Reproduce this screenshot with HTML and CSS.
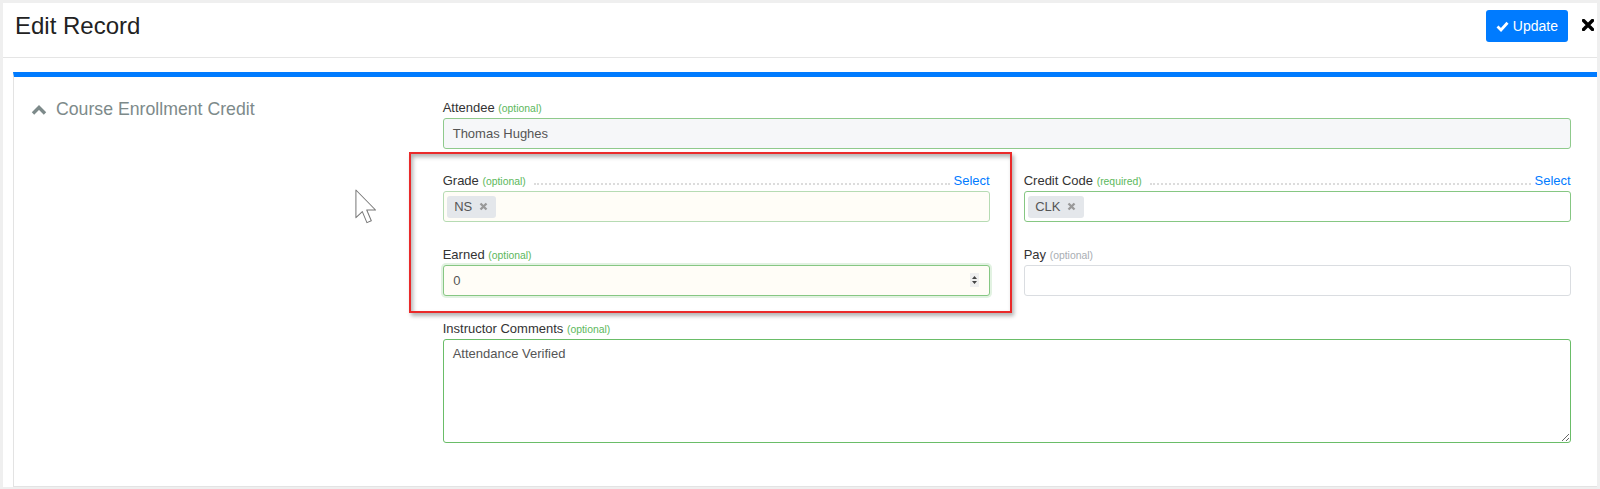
FILE: index.html
```html
<!DOCTYPE html>
<html lang="en">
<head>
    <meta charset="UTF-8">
    <meta name="viewport" content="width=device-width, initial-scale=1.0">
    <title>Edit Record</title>
    <link rel="stylesheet" href="styles.css">
</head>
<body>

    <div class="modal">
        <header class="modal-header">
            <h1 class="modal-title">Edit Record</h1>
            <div class="modal-actions">
                <button class="btn-update">
                    <svg width="13" height="11" viewBox="0 0 13 11"><polyline points="1.5,5.5 5,9 11.5,1.8" fill="none" stroke="#fff" stroke-width="2.8"/></svg>
                    Update
                </button>
                <span class="btn-close">
                    <svg width="12" height="12" viewBox="0 0 12 12"><path d="M1.5 1.5 L10.5 10.5 M10.5 1.5 L1.5 10.5" stroke="#000" stroke-width="3.4" stroke-linecap="round"/></svg>
                </span>
            </div>
        </header>

        <div class="modal-body">
            <div class="card">
                <div class="card-side">
                    <h2 class="section-title">
                        <svg width="16" height="10" viewBox="0 0 16 10"><polyline points="2,8.5 8,2.5 14,8.5" fill="none" stroke="#7d8a8a" stroke-width="3.4"/></svg>
                        Course Enrollment Credit
                    </h2>
                </div>

                <div class="card-form">
                    <div class="field">
                        <label class="field-label">Attendee <span class="hint">(optional)</span></label>
                        <div class="control control-readonly">Thomas Hughes</div>
                    </div>

                    <div class="field-row">
                        <div class="field">
                            <div class="label-row">
                                <span class="field-label">Grade <span class="hint">(optional)</span></span>
                                <span class="leader"></span>
                                <a class="select-link">Select</a>
                            </div>
                            <div class="control control-cream">
                                <span class="tag">NS <svg width="9" height="9" viewBox="0 0 9 9"><path d="M1.5 1.5 L7.5 7.5 M7.5 1.5 L1.5 7.5" stroke="#999" stroke-width="2.3"/></svg></span>
                            </div>
                        </div>
                        <div class="field">
                            <div class="label-row">
                                <span class="field-label">Credit Code <span class="hint">(required)</span></span>
                                <span class="leader"></span>
                                <a class="select-link">Select</a>
                            </div>
                            <div class="control control-valid">
                                <span class="tag">CLK <svg width="9" height="9" viewBox="0 0 9 9"><path d="M1.5 1.5 L7.5 7.5 M7.5 1.5 L1.5 7.5" stroke="#999" stroke-width="2.3"/></svg></span>
                            </div>
                        </div>
                    </div>

                    <div class="field-row">
                        <div class="field">
                            <label class="field-label">Earned <span class="hint">(optional)</span></label>
                            <div class="control control-cream control-focus">
                                <span class="control-value">0</span>
                                <svg class="spinner" width="9" height="14" viewBox="0 0 9 14"><rect x="0" y="0" width="9" height="14" fill="#efefef"/><path d="M4.5 3 L7 6 L2 6 Z M4.5 11 L7 8 L2 8 Z" fill="#444"/></svg>
                            </div>
                        </div>
                        <div class="field">
                            <label class="field-label">Pay <span class="hint hint-muted">(optional)</span></label>
                            <div class="control"></div>
                        </div>
                    </div>

                    <div class="field field-last">
                        <label class="field-label">Instructor Comments <span class="hint">(optional)</span></label>
                        <textarea class="comments" readonly>Attendance Verified</textarea>
                    </div>
                </div>
            </div>
        </div>

        <!-- screenshot annotations -->
        <div class="highlight-box"></div>
        <svg class="pointer" width="22" height="35" viewBox="0 0 12 19"><path d="M0.5 0.5 L0.5 15.6 L4 12.3 L6.5 18.3 L8.9 17.3 L6.4 11.4 L11.2 11.4 Z" fill="#fff" stroke="#777" stroke-width="0.55" stroke-linejoin="round"/></svg>
    </div>

</body>
</html>
```

FILE: styles.css
```css
body {
    margin: 0;
    height: 489px;
    overflow: hidden;
    background-color: #efefef;
    font-family: "Liberation Sans", Arial, sans-serif;
    color: #333;
}

.modal {
    position: relative;
    margin: 3px 3px 0 3px;
    height: 484px;
    overflow: hidden;
    background-color: #fff;
}

.modal-header {
    box-sizing: border-box;
    height: 55px;
    padding: 7px 3px 0 12px;
    display: flex;
    justify-content: space-between;
    align-items: flex-start;
    border-bottom: 1px solid #e5e5e5;
}

.modal-title {
    margin: 1px 0 0 0;
    font-size: 24px;
    font-weight: normal;
    line-height: 29px;
    color: #222;
}

.modal-actions {
    display: flex;
    align-items: flex-start;
}

.btn-update {
    height: 32px;
    padding: 0 10px;
    display: flex;
    align-items: center;
    gap: 4px;
    background-color: #007bff;
    color: white;
    border: none;
    border-radius: 3px;
    font-family: "Liberation Sans", Arial, sans-serif;
    font-size: 14px;
}

.btn-close {
    margin: 9px 0 0 14px;
    display: block;
    height: 12px;
}

.btn-close svg {
    display: block;
}

.modal-body {
    padding: 14px 0 0 10px;
}

.card {
    display: flex;
    border: 1px solid #e3e3e3;
    border-top: 5px solid #007bff;
    border-right: none;
    padding: 20.5px 0 43.5px 17px;
}

.card-side {
    width: 411.7px;
    flex-shrink: 0;
}

.section-title {
    margin: 0;
    padding-top: 1.5px;
    display: flex;
    align-items: center;
    gap: 9px;
    font-size: 17.7px;
    font-weight: normal;
    line-height: 21.6px;
    color: #7d8a8a;
}

.card-form {
    width: 1128px;
    flex-shrink: 0;
}

.field {
    margin-bottom: 22.7px;
}

.field-last {
    margin-bottom: 0;
}

.field-row {
    display: grid;
    grid-template-columns: 1fr 1fr;
    column-gap: 34px;
}

.field-label {
    display: block;
    height: 19px;
    margin-bottom: 1px;
    font-size: 13px;
    line-height: 19px;
    color: #333;
}

.hint {
    font-size: 10.4px;
    line-height: 1;
    color: #5cb85c;
}

.hint-muted {
    color: #a9aeb3;
}

.label-row {
    display: flex;
    height: 19px;
    margin-bottom: 1px;
}

.label-row .field-label {
    margin-bottom: 0;
}

.leader {
    flex: 1;
    align-self: flex-end;
    margin: 0 4px 5px 8px;
    border-bottom: 2px dotted #dcdcdc;
}

.select-link {
    font-size: 13px;
    line-height: 19px;
    color: #007bff;
}

.control {
    box-sizing: border-box;
    height: 31px;
    padding: 0 9px;
    display: flex;
    align-items: center;
    border: 1px solid #dadde1;
    border-radius: 3px;
    background-color: #fff;
    font-size: 13px;
    color: #555;
}

.control-readonly {
    background-color: #f6f7f9;
    border-color: #8fca8c;
}

.control-cream {
    background-color: #fffdf7;
    border-color: #b6dbb3;
    padding-left: 3.5px;
}

.control-valid {
    border-color: #86c783;
    padding-left: 3.5px;
}

.control-focus {
    border-color: #86c783;
    padding-left: 9.5px;
    padding-right: 10px;
    box-shadow: 0 0 0 2px rgba(92, 184, 92, 0.18);
}

.control-value {
    flex: 1;
}

.spinner {
    display: block;
}

.tag {
    height: 22px;
    padding: 0 8px 0 7px;
    display: flex;
    align-items: center;
    gap: 7px;
    background-color: #e4e7eb;
    border-radius: 3px;
    color: #555;
}

.comments {
    display: block;
    box-sizing: border-box;
    width: 100%;
    height: 104px;
    margin: 0;
    padding: 4.5px 9px;
    border: 1px solid #6abd68;
    border-radius: 3px;
    font-family: "Liberation Sans", Arial, sans-serif;
    font-size: 13px;
    line-height: 19.5px;
    color: #555;
    outline: none;
}

.highlight-box {
    position: absolute;
    left: 406px;
    top: 149px;
    width: 599px;
    height: 157px;
    border: 2px solid #ea2a2a;
    box-shadow: 2px 3px 4px rgba(0, 0, 0, 0.3), inset 2px 3px 4px rgba(0, 0, 0, 0.3);
}

.pointer {
    position: absolute;
    left: 352px;
    top: 186px;
}
```
